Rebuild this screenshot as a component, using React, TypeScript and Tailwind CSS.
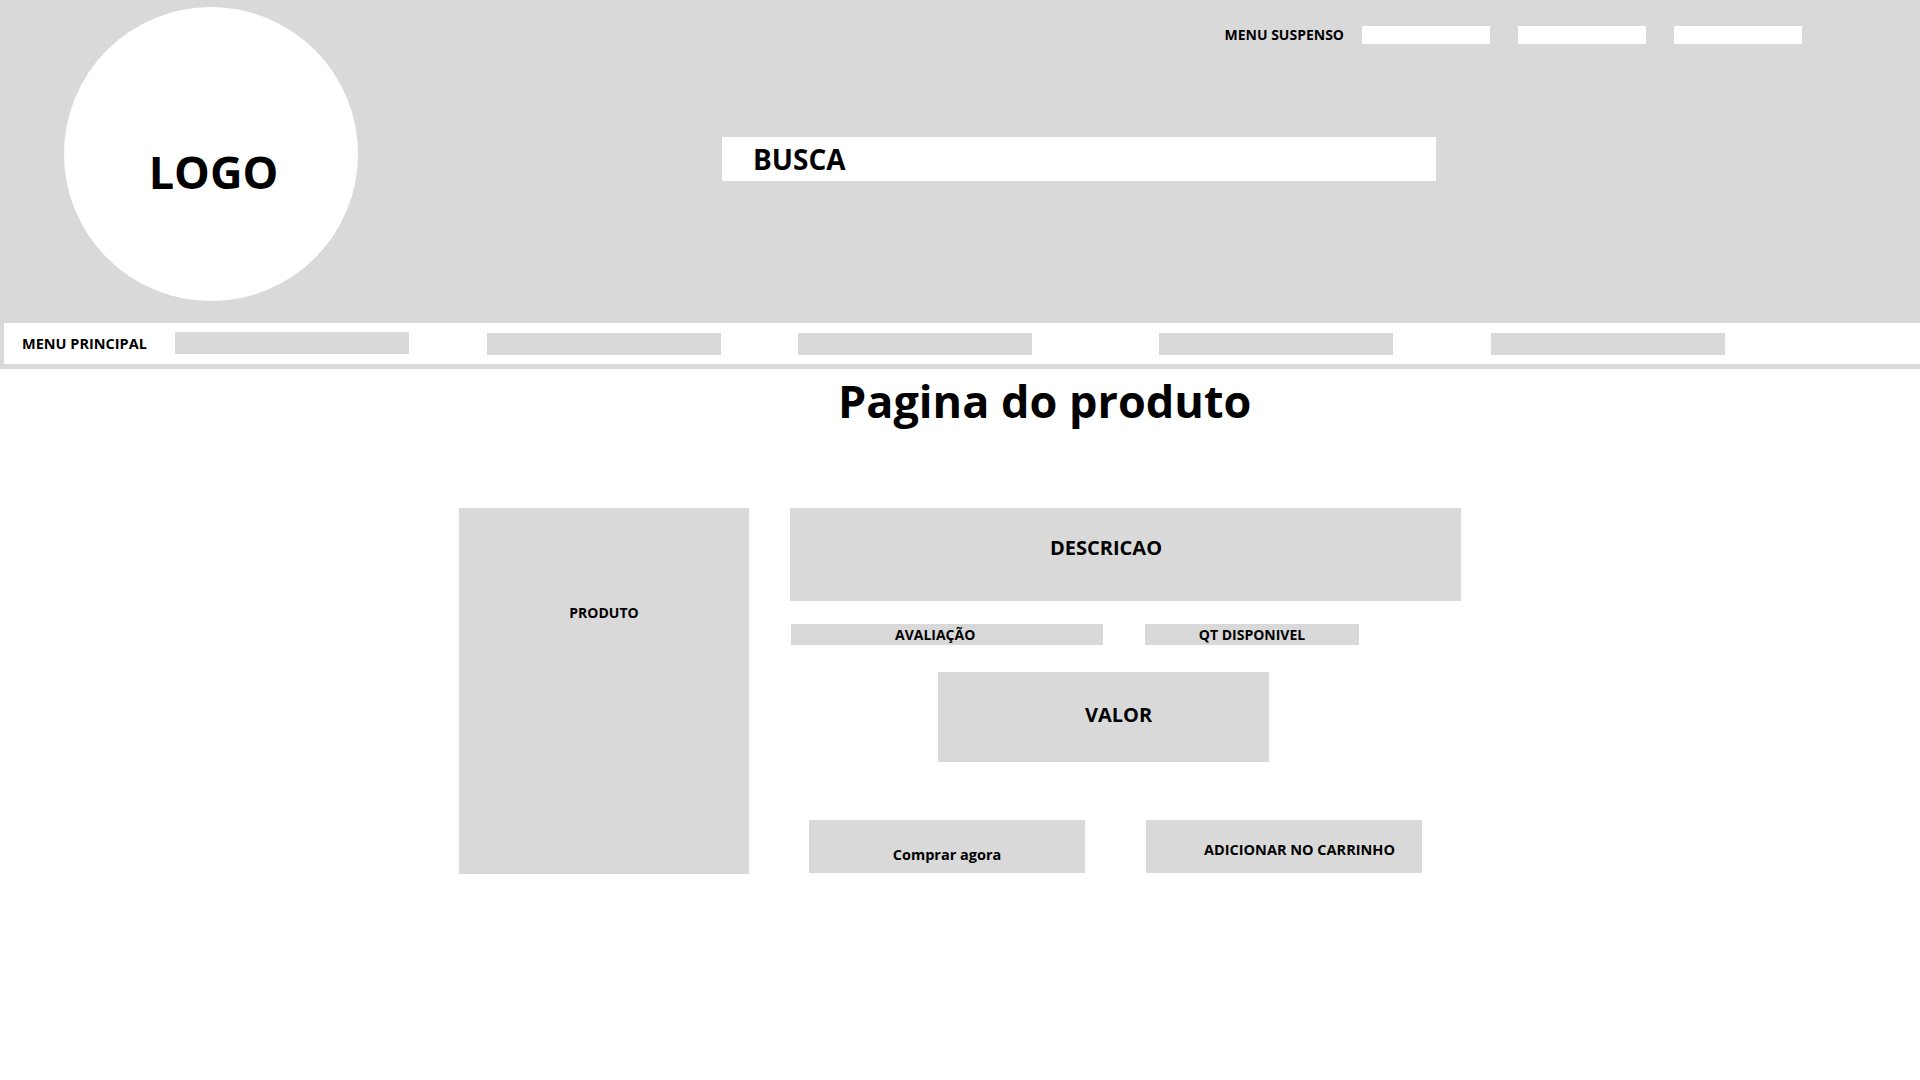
const font = "font-['Open_Sans',sans-serif] font-bold text-black";

function TopBar() {
  return (
    <div className="flex h-[44px] items-start justify-end pr-[118px] pt-[26px]">
      <span className="mr-[18px] text-[14px] leading-[18px]">MENU SUSPENSO</span>
      <div className="flex gap-[28px]">
        <div className="h-[18px] w-[128px] bg-white" />
        <div className="h-[18px] w-[128px] bg-white" />
        <div className="h-[18px] w-[128px] bg-white" />
      </div>
    </div>
  );
}

function MainMenu() {
  return (
    <div className="ml-[4px] mt-[22px] flex h-[41px] items-center bg-white pl-[18px]">
      <span className="w-[153px] text-[14.5px] leading-[20px]">MENU PRINCIPAL</span>
      <div className="-mt-[2px] h-[22px] w-[234px] bg-[#d9d9d9]" />
      <div className="ml-[78px] h-[22px] w-[234px] bg-[#d9d9d9]" />
      <div className="ml-[77px] h-[22px] w-[234px] bg-[#d9d9d9]" />
      <div className="ml-[127px] h-[22px] w-[234px] bg-[#d9d9d9]" />
      <div className="ml-[98px] h-[22px] w-[234px] bg-[#d9d9d9]" />
    </div>
  );
}

export default function App() {
  return (
    <div className={`min-h-screen w-[1920px] bg-white ${font}`}>
      <header className="bg-[#d9d9d9] pb-[5px]">
        <div className="flex items-start">
          <div className="ml-[64px] mt-[7px] flex h-[294px] w-[294px] shrink-0 items-center justify-center rounded-full bg-white">
            <span className="ml-[5px] mt-[36px] text-[45px] leading-[56px]">LOGO</span>
          </div>
          <div className="flex-1">
            <TopBar />
            <div className="ml-[364px] mt-[93px] flex h-[44px] w-[714px] items-center bg-white pl-[31px]">
              <span className="text-[28px] leading-[36px]">BUSCA</span>
            </div>
          </div>
        </div>
        <MainMenu />
      </header>

      <main>
        <h1 className="ml-[838px] mt-[9px] text-[45px] leading-[45px]">Pagina do produto</h1>

        <div className="ml-[459px] mt-[85px] flex items-start">
          <div className="h-[366px] w-[290px] bg-[#d9d9d9] pt-[95px] text-center text-[14px] leading-[20px]">PRODUTO</div>

          <div className="ml-[41px] flex w-[671px] flex-col">
            <div className="h-[93px] bg-[#d9d9d9] pl-[260px] pt-[27px] text-[20px] leading-[26px]">DESCRICAO</div>

            <div className="mt-[23px] flex">
              <div className="ml-[1px] h-[21px] w-[312px] bg-[#d9d9d9] pl-[104px] text-[14px] leading-[21px]">AVALIAÇÃO</div>
              <div className="ml-[42px] h-[21px] w-[214px] bg-[#d9d9d9] text-center text-[14px] leading-[21px]">QT DISPONIVEL</div>
            </div>

            <div className="ml-[148px] mt-[27px] h-[90px] w-[331px] bg-[#d9d9d9] pl-[147px] pt-[29px] text-[20px] leading-[28px]">VALOR</div>

            <div className="mt-[58px] flex">
              <div className="ml-[19px] h-[53px] w-[276px] bg-[#d9d9d9] pt-[25px] text-center text-[14.5px] leading-[20px]">Comprar agora</div>
              <div className="ml-[61px] h-[53px] w-[276px] bg-[#d9d9d9] pl-[58px] pt-[20px] text-[14.5px] leading-[20px]">ADICIONAR NO CARRINHO</div>
            </div>
          </div>
        </div>
      </main>
    </div>
  );
}
